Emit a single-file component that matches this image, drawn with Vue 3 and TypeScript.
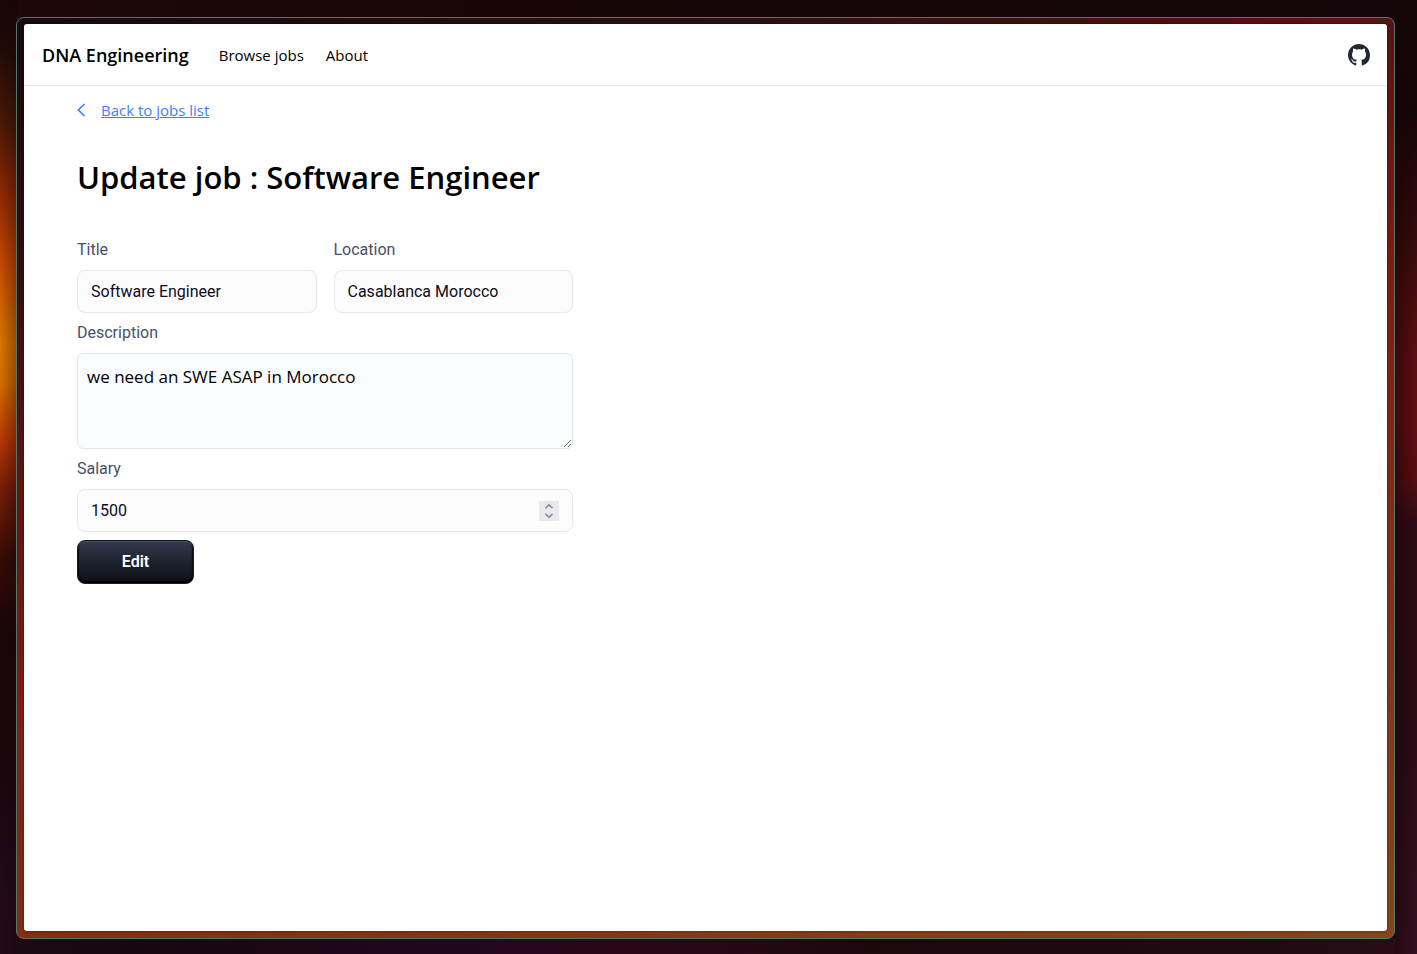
<script setup lang="ts">
import { reactive } from 'vue'

interface Job {
  title: string
  location: string
  description: string
  salary: number
}

const job = reactive<Job>({
  title: 'Software Engineer',
  location: 'Casablanca Morocco',
  description: 'we need an SWE ASAP in Morocco',
  salary: 1500,
})

const heading = `Update job : ${job.title}`

function step(amount: number): void {
  job.salary += amount
}
</script>

<template>
  <div class="desktop">
    <div class="frame">
      <div class="page">
        <header class="topbar">
          <a class="brand" href="#">DNA Engineering</a>
          <nav class="links">
            <a href="#">Browse jobs</a>
            <a href="#">About</a>
          </nav>
          <a class="github" href="#" aria-label="GitHub">
            <svg viewBox="0 0 16 16" width="22" height="22" aria-hidden="true">
              <path
                fill="currentColor"
                d="M8 0C3.58 0 0 3.58 0 8c0 3.54 2.29 6.53 5.47 7.59.4.07.55-.17.55-.38 0-.19-.01-.82-.01-1.49-2.01.37-2.53-.49-2.69-.94-.09-.23-.48-.94-.82-1.13-.28-.15-.68-.52-.01-.53.63-.01 1.08.58 1.23.82.72 1.21 1.87.87 2.33.66.07-.52.28-.87.51-1.07-1.78-.2-3.64-.89-3.64-3.95 0-.87.31-1.59.82-2.15-.08-.2-.36-1.02.08-2.12 0 0 .67-.21 2.2.82.64-.18 1.32-.27 2-.27s1.36.09 2 .27c1.53-1.04 2.2-.82 2.2-.82.44 1.1.16 1.92.08 2.12.51.56.82 1.27.82 2.15 0 3.07-1.87 3.75-3.65 3.95.29.25.54.73.54 1.48 0 1.07-.01 1.93-.01 2.2 0 .21.15.46.55.38A8.01 8.01 0 0 0 16 8c0-4.42-3.58-8-8-8z"
              />
            </svg>
          </a>
        </header>

        <main class="content">
          <div class="back">
            <svg viewBox="0 0 8 14" width="8" height="14" aria-hidden="true">
              <path d="M7 1.5 1.2 7 7 12.5" fill="none" stroke="currentColor" stroke-width="1.7" stroke-linecap="round" stroke-linejoin="round" />
            </svg>
            <a href="#">Back to jobs list</a>
          </div>

          <h1>{{ heading }}</h1>

          <form class="form" @submit.prevent>
            <div class="pair">
              <div class="field">
                <label for="title">Title</label>
                <input id="title" v-model="job.title" class="control" type="text" />
              </div>
              <div class="field">
                <label for="location">Location</label>
                <input id="location" v-model="job.location" class="control" type="text" />
              </div>
            </div>
            <div class="field">
              <label for="description">Description</label>
              <textarea id="description" v-model="job.description"></textarea>
            </div>
            <div class="field">
              <label for="salary">Salary</label>
              <div class="control number">
                <input id="salary" v-model.number="job.salary" type="number" />
                <span class="stepper">
                  <button type="button" aria-label="Increase salary" @click="step(1)">
                    <svg viewBox="0 0 10 10" width="10" height="10"><path d="M1.5 7.2 5 3.8l3.5 3.4" /></svg>
                  </button>
                  <button type="button" aria-label="Decrease salary" @click="step(-1)">
                    <svg viewBox="0 0 10 10" width="10" height="10"><path d="M1.5 2.8 5 6.2l3.5-3.4" /></svg>
                  </button>
                </span>
              </div>
            </div>
            <button class="submit" type="submit">Edit</button>
          </form>
        </main>
      </div>
    </div>
  </div>
</template>

<style>
body {
  margin: 0;
}
</style>

<style scoped>
* {
  box-sizing: border-box;
}

.desktop {
  display: flex;
  min-height: 100vh;
  padding: 17px 22px 15px 16px;
  font-family: 'Segoe UI', 'Open Sans', 'Noto Sans', sans-serif;
  color: #000;
  background:
    linear-gradient(to right, transparent, rgba(20, 5, 8, 0.35) 16px, transparent 17px) left / 17px 100% no-repeat,
    linear-gradient(#180507, #210a05 5%, #4a1806 13%, #8d2803 20%, #c94c02 28%, #d97700 36%, #d57000 40%, #b83a04 46%, #7a1e05 51%, #3a0c06 58%, #1a0507 66%, #19060b 78%, #210919 92%, #240a1d) left / 17px 100% no-repeat,
    linear-gradient(to right, rgba(18, 4, 8, 0.5), transparent) right / 22px 100% no-repeat,
    linear-gradient(#150609, #160507 12%, #350a0b 24%, #5c0d10 36%, #650d11 44%, #580c12 50%, #300b14 55%, #2e0c16 75%, #35101f) right / 22px 100% no-repeat,
    linear-gradient(to right, #1c0a12, #170810 10%, #23061e 33%, #2a0716 46%, #1d080e 62%, #200a12 90%, #2b0d18) bottom / 100% 16px no-repeat,
    linear-gradient(to right, #1e0908, #170506 40%, #14060a);
}

.frame {
  display: flex;
  flex: 1;
  padding: 6px 7px 7px 7px;
  border: 1px solid #52786c;
  border-radius: 8px;
  background: linear-gradient(163deg, #18080c, #310d0f 17%, #5c1512 34%, #7f1c12 50%, #832d15 69%, #85451d);
}

.page {
  flex: 1;
  border-radius: 3px;
  background: #fff;
  box-shadow: 0 0 3px rgba(0, 0, 0, 0.5);
}

.topbar {
  display: flex;
  align-items: center;
  height: 62px;
  padding: 0 17px 0 18px;
  border-bottom: 1px solid #e5e7eb;
}

.topbar a {
  color: #000;
  text-decoration: none;
}

.brand {
  font-size: 18px;
  line-height: 28px;
  font-weight: 600;
}

.links {
  display: flex;
  gap: 22px;
  margin-left: 30px;
  font-size: 15px;
  line-height: 24px;
}

.topbar .github {
  display: flex;
  margin-left: auto;
  color: #24292f;
}

.content {
  padding: 12px 53px;
}

.back {
  display: flex;
  align-items: center;
  gap: 16px;
  font-size: 15px;
  line-height: 24px;
  color: #3b82f6;
}

.back a {
  color: inherit;
}

h1 {
  margin: 32px 0 38px;
  font-size: 31px;
  line-height: 46px;
  font-weight: 600;
}

.form {
  display: flex;
  flex-direction: column;
  gap: 8px;
  width: 100%;
  max-width: 496px;
}

.pair {
  display: grid;
  grid-template-columns: 1fr 1fr;
  gap: 17px;
}

.field {
  display: flex;
  flex-direction: column;
  gap: 8px;
  min-width: 0;
}

label {
  font: 450 16px/24px Roboto, sans-serif;
  color: #475069;
}

.control {
  width: 100%;
  height: 43px;
  padding: 0 13px;
  border: 1px solid #e6e6eb;
  border-radius: 8px;
  background: #fcfcfc;
  font: 450 16px/24px Roboto, sans-serif;
  color: #0d0c22;
}

textarea {
  display: block;
  width: 100%;
  height: 96px;
  padding: 11px 9px;
  border: 1px solid #e2e4e8;
  border-radius: 6px;
  background: #fbfcfe;
  font: 400 17px/24px 'Segoe UI', 'Open Sans', 'Noto Sans', sans-serif;
  color: #000;
  resize: both;
}

.number {
  display: flex;
  align-items: center;
}

.number input {
  flex: 1;
  min-width: 0;
  padding: 0;
  border: 0;
  background: none;
  font: inherit;
  color: inherit;
  appearance: textfield;
}

.number input::-webkit-inner-spin-button {
  appearance: none;
  margin: 0;
}

.stepper {
  display: flex;
  flex-direction: column;
  width: 20px;
  background: #e8e8ed;
}

.stepper button {
  display: flex;
  justify-content: center;
  height: 10px;
  padding: 0;
  border: 0;
  background: none;
}

.stepper path {
  fill: none;
  stroke: #9594a3;
  stroke-width: 1.8;
}

.submit {
  width: 117px;
  height: 44px;
  border: 1px solid #151a25;
  border-radius: 8px;
  background: linear-gradient(#323a4c, #1d222d 50%, #0c0f16);
  box-shadow:
    inset 0 1px 1px #48526a,
    inset 0 -2px 1px #000,
    inset 1px 0 1px #05070a,
    inset -1px 0 1px #05070a;
  font: 600 16px/24px Roboto, sans-serif;
  color: #fff;
}
</style>
